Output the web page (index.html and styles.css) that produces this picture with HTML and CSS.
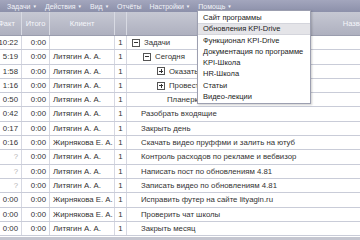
FILE: index.html
```html
<!DOCTYPE html>
<html>
<head>
    <meta charset="utf-8">
    <title>Задачи</title>
    <link rel="stylesheet" href="styles.css">
</head>
<body>
    <div class="menubar">
        <span class="menu">Задачи <span class="caret">▼</span></span>
        <span class="menu">Действия <span class="caret">▼</span></span>
        <span class="menu">Вид <span class="caret">▼</span></span>
        <span class="menu">Отчёты</span>
        <span class="menu">Настройки <span class="caret">▼</span></span>
        <span class="menu open">Помощь <span class="caret">▼</span></span>
    </div>

    <div class="grid">
        <div class="row head">
            <div class="c fact">Факт</div>
            <div class="c total">Итого</div>
            <div class="c client">Клиент</div>
            <div class="c num"></div>
            <div class="c name">Название</div>
        </div>

        <div class="row">
            <div class="c fact">10:22</div><div class="c total">0:00</div><div class="c client"></div><div class="c num">1</div>
            <div class="c name lvl0"><span class="tw minus"></span>Задачи</div>
        </div>
        <div class="row">
            <div class="c fact">5:19</div><div class="c total">0:00</div><div class="c client">Литягин А. А.</div><div class="c num">1</div>
            <div class="c name lvl1"><span class="tw minus"></span>Сегодня</div>
        </div>
        <div class="row">
            <div class="c fact">1:58</div><div class="c total">0:00</div><div class="c client">Литягин А. А.</div><div class="c num">1</div>
            <div class="c name lvl2"><span class="tw plus"></span>Оказать</div>
        </div>
        <div class="row">
            <div class="c fact">1:16</div><div class="c total">0:00</div><div class="c client">Литягин А. А.</div><div class="c num">1</div>
            <div class="c name lvl2"><span class="tw plus"></span>Провести</div>
        </div>
        <div class="row">
            <div class="c fact">0:50</div><div class="c total">0:00</div><div class="c client">Литягин А. А.</div><div class="c num">1</div>
            <div class="c name lvl3">Планерки</div>
        </div>
        <div class="row">
            <div class="c fact">0:42</div><div class="c total">0:00</div><div class="c client">Литягин А. А.</div><div class="c num">1</div>
            <div class="c name leaf">Разобрать входящие</div>
        </div>
        <div class="row">
            <div class="c fact">0:17</div><div class="c total">0:00</div><div class="c client">Литягин А. А.</div><div class="c num">1</div>
            <div class="c name leaf">Закрыть день</div>
        </div>
        <div class="row">
            <div class="c fact">0:16</div><div class="c total">0:00</div><div class="c client">Жирнякова Е. А.</div><div class="c num">1</div>
            <div class="c name leaf">Скачать видео пруффми и залить на ютуб</div>
        </div>
        <div class="row">
            <div class="c fact none">?</div><div class="c total">0:00</div><div class="c client">Литягин А. А.</div><div class="c num">1</div>
            <div class="c name leaf">Контроль расходов по рекламе и вебвизор</div>
        </div>
        <div class="row">
            <div class="c fact none">?</div><div class="c total">0:00</div><div class="c client">Литягин А. А.</div><div class="c num">1</div>
            <div class="c name leaf">Написать пост по обновлениям 4.81</div>
        </div>
        <div class="row">
            <div class="c fact none">?</div><div class="c total">0:00</div><div class="c client">Литягин А. А.</div><div class="c num">1</div>
            <div class="c name leaf">Записать видео по обновлениям 4.81</div>
        </div>
        <div class="row">
            <div class="c fact">0:00</div><div class="c total">0:00</div><div class="c client">Жирнякова Е. А.</div><div class="c num">1</div>
            <div class="c name leaf">Исправить футер на сайте lityagin.ru</div>
        </div>
        <div class="row">
            <div class="c fact">0:00</div><div class="c total">0:00</div><div class="c client">Жирнякова Е. А.</div><div class="c num">1</div>
            <div class="c name leaf">Проверить чат школы</div>
        </div>
        <div class="row">
            <div class="c fact">0:00</div><div class="c total">0:00</div><div class="c client">Литягин А. А.</div><div class="c num">1</div>
            <div class="c name leaf">Закрыть месяц</div>
        </div>
    </div>
    <div class="hscroll"></div>

    <ul class="dropdown">
        <li>Сайт программы</li>
        <li class="active">Обновления KPI-Drive</li>
        <li>Функционал KPI-Drive</li>
        <li>Документация по программе</li>
        <li>KPI-Школа</li>
        <li>HR-Школа</li>
        <li>Статьи</li>
        <li>Видео-лекции</li>
    </ul>
</body>
</html>
```

FILE: styles.css
```css
body {
    margin: 0;
    width: 360px;
    height: 240px;
    overflow: hidden;
    position: relative;
    background-color: #ffffff;
    font-family: "Liberation Sans", Arial, sans-serif;
    color: #333333;
}

.menubar {
    height: 12px;
    display: flex;
    align-items: center;
    gap: 8px;
    padding-left: 7px;
    background: linear-gradient(#a3a6bd, #8c90aa);
    font-size: 7px;
    color: #f2f3f8;
}

.caret {
    font-size: 4.5px;
    vertical-align: 1px;
}

.grid {
    margin-left: -8px;
}

.row {
    display: grid;
    grid-template-columns: 30px 28px 65px 12px 466px;
    height: 14.3px;
    font-size: 7.8px;
    line-height: 13.3px;
    border-bottom: 1px solid #c9ccd8;
    box-sizing: border-box;
}

.row.head {
    height: 24px;
    line-height: 24px;
    font-size: 7.5px;
    background: linear-gradient(#c6c8d3, #aeb0bf);
    color: #f5f6fa;
    border-bottom: 1px solid #9a9dae;
}

.c {
    white-space: nowrap;
    overflow: hidden;
    border-right: 1px solid #d6d8e2;
    padding: 0 3px;
}

.head .c {
    text-align: center;
    border-right: 1px solid #d8dae3;
}

.head .name {
    justify-content: center;
}

.fact,
.total {
    text-align: right;
}

.none {
    color: #b4b4b4;
}

.num {
    text-align: center;
    padding: 0;
}

.name {
    display: flex;
    align-items: center;
}

.lvl0 { padding-left: 5px; }
.lvl1 { padding-left: 16px; }
.lvl2 { padding-left: 30px; }
.lvl3 { padding-left: 40px; }
.leaf { padding-left: 14px; }

.tw {
    width: 6px;
    height: 6px;
    border: 1px solid #555555;
    margin-right: 4px;
    position: relative;
    flex: none;
}

.tw::before {
    content: "";
    position: absolute;
    left: 1px;
    right: 1px;
    top: 2.5px;
    height: 1px;
    background-color: #333333;
}

.tw.plus::after {
    content: "";
    position: absolute;
    top: 1px;
    bottom: 1px;
    left: 2.5px;
    width: 1px;
    background-color: #333333;
}

.hscroll {
    position: absolute;
    left: 0;
    right: 0;
    bottom: 0;
    height: 3px;
    background-color: #c4c6d0;
}

.dropdown {
    position: absolute;
    left: 197px;
    top: 10px;
    width: 112px;
    margin: 0;
    padding: 1px 0;
    list-style: none;
    background-color: #ffffff;
    border: 1px solid #9c9fb0;
    box-shadow: 1px 1px 2px rgba(0, 0, 0, 0.2);
    font-size: 7.5px;
    color: #222222;
}

.dropdown li {
    height: 11.3px;
    line-height: 11.3px;
    padding-left: 5px;
    box-sizing: border-box;
}

.dropdown li.active {
    background-color: #e4e4e8;
    border-top: 1px solid #d4d5dc;
    border-bottom: 1px solid #d4d5dc;
    line-height: 9.3px;
}
```
